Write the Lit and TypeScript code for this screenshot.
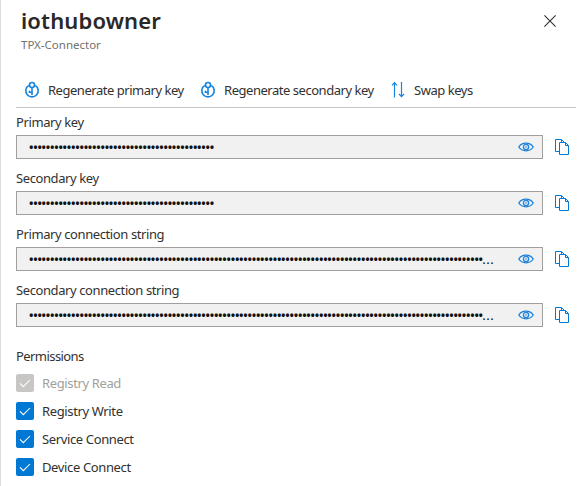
import { LitElement, html, css, svg } from "lit";
import { customElement, property } from "lit/decorators.js";

const keyIcon = svg`<svg width="16" height="18" viewBox="0 0 16 18" fill="none" stroke="#1484e0" stroke-width="1.6">
  <path d="M4.8 4.4A6.2 6.2 0 1 0 11.2 4.4"/><circle cx="8" cy="4" r="2.5"/><path d="M8 6.5V14M8 11.3H5.5V9.8"/></svg>`;
const swapIcon = svg`<svg width="16" height="18" viewBox="0 0 16 18" fill="none" stroke="#1484e0" stroke-width="1.2">
  <path d="M4.5 16.5V2M2 4.4L4.5 1.7L7 4.4"/><path d="M11.5 1V15.4M9 13L11.5 15.7L14 13"/></svg>`;
const eyeIcon = svg`<svg width="16" height="10" viewBox="0 0 16 10" fill="none" stroke="#1a80d9" stroke-width="1.3">
  <path d="M.8 5C4 -.1 12 -.1 15.2 5C12 10.1 4 10.1 .8 5Z"/><circle cx="8" cy="5" r="2.6"/><circle cx="8" cy="5" r=".8" fill="#1a80d9" stroke="none"/></svg>`;
const copyIcon = svg`<svg width="15" height="16" viewBox="0 0 15 16" fill="none" stroke="#0078d4" stroke-width="1">
  <path d="M4.5 12.5H.5V.5H6.5L9.5 3.5"/><path d="M4.5 3.5H10.5L13.5 6.5V15.5H4.5Z" fill="#fff"/><path d="M10.5 3.5V6.5H13.5M6.5 .5V3.5"/></svg>`;
const checkIcon = svg`<svg width="18" height="18" viewBox="0 0 18 18" fill="none" stroke="#fff" stroke-width="1.05"><path d="M4 9.4L7.3 12.7L14 6"/></svg>`;

@customElement("key-field")
class KeyField extends LitElement {
  @property() label = "";
  @property({ type: Number }) dots = 44;
  @property({ type: Boolean }) clipped = false;
  static styles = css`
    :host { display: block; height: 56px; }
    .label { height: 20px; line-height: 20px; margin-bottom: 3px; letter-spacing: -0.4px; }
    .row { display: flex; align-items: center; }
    .box { box-sizing: border-box; width: 527px; height: 24px; background: #f1f1f1; border: 1px solid #a19f9d;
      display: flex; align-items: center; padding: 0 8px 0 11.5px; }
    .value { display: flex; flex: 1; white-space: nowrap; line-height: 22px; color: #111; letter-spacing: 0.5px; }
    .mask { font-size: 14.5px; letter-spacing: -1.25px; }
    .copy { margin-left: 12px; height: 16px; }
    svg { display: block; }
  `;
  render() {
    return html`<div class="label">${this.label}</div>
      <div class="row"><div class="box"><div class="value"><span class="mask">${"•".repeat(this.dots)}</span>${this.clipped ? html`<span>...</span>` : ""}</div>${eyeIcon}</div>
      <div class="copy">${copyIcon}</div></div>`;
  }
}

@customElement("app-root")
class AppRoot extends LitElement {
  static styles = css`
    :host { display: block; box-sizing: border-box; width: 586px; height: 486px; overflow: hidden; background: #fff;
      border-left: 1px solid #dedede; padding: 7px 10px 0 15px;
      font: 13px "Noto Sans", sans-serif; letter-spacing: -0.47px; color: #323130; }
    svg { display: block; }
    .head { display: flex; justify-content: space-between; height: 66px; padding: 0 20px 0 5px; }
    .title { font-size: 22px; line-height: 28px; margin-top: -1px; font-weight: 600; letter-spacing: 0.14px; color: #292827; }
    .sub { font-size: 11.5px; line-height: 16px; margin-top: 3px; letter-spacing: 0; color: #737170; }
    .close { margin-top: 8px; }
    .bar { display: flex; box-sizing: border-box; height: 35px; border-bottom: 1px solid #c8c6c4; padding-left: 8px; }
    .cmd { display: flex; gap: 8px; height: 34px; align-items: center; margin-right: 16.3px; white-space: nowrap; }
    .fields { width: 560px; padding-top: 4px; }
    .perm { line-height: 20px; margin-top: 10px; margin-bottom: 8px; letter-spacing: -0.57px; }
    .check { display: flex; align-items: center; height: 18px; margin-bottom: 10px; gap: 8px; letter-spacing: -0.37px; }
    .tick { width: 18px; height: 18px; border-radius: 2px; background: #0078d4; }
    .off { color: #a19f9d; }
    .off .tick { background: #c8c6c4; }
  `;
  render() {
    return html`
      <div class="head"><div><div class="title">iothubowner</div><div class="sub">TPX-Connector</div></div>
        <svg class="close" width="12" height="12" viewBox="0 0 12 12" stroke="#323130" stroke-width="1.1"><path d="M.4 .4L11.6 11.6M11.6 .4L.4 11.6"/></svg></div>
      <div class="bar">
        <div class="cmd">${keyIcon}<span>Regenerate primary key</span></div>
        <div class="cmd">${keyIcon}<span>Regenerate secondary key</span></div>
        <div class="cmd">${swapIcon}<span>Swap keys</span></div>
      </div>
      <div class="fields">
        <key-field label="Primary key"></key-field>
        <key-field label="Secondary key"></key-field>
        <key-field label="Primary connection string" dots="108" clipped></key-field>
        <key-field label="Secondary connection string" dots="108" clipped></key-field>
      </div>
      <div class="perm">Permissions</div>
      ${["Registry Read", "Registry Write", "Service Connect", "Device Connect"].map((t, i) => html`
        <div class="check ${i === 0 ? "off" : ""}"><div class="tick">${checkIcon}</div><span>${t}</span></div>`)}
    `;
  }
}
